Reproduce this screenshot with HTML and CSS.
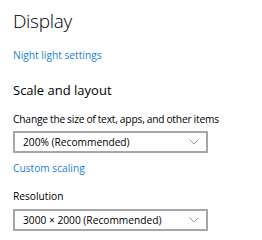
FILE: index.html
```html
<!DOCTYPE html>
<html>
<head>
    <title>Display</title>
    <link rel="stylesheet" href="styles.css">
</head>
<body>
    <h1 class="title">Display</h1>
    <a class="link link-first" href="#">Night light settings</a>

    <h2 class="section">Scale and layout</h2>

    <div class="field">
        <label class="label label-long">Change the size of text, apps, and other items</label>
        <div class="select">
            <span>200% (Recommended)</span>
            <svg class="chevron" width="10" height="6" viewBox="0 0 10 6"><path d="M0.5 0.5 L5 5 L9.5 0.5" fill="none" stroke="#999" stroke-width="1"/></svg>
        </div>
    </div>

    <a class="link link-custom" href="#">Custom scaling</a>

    <div class="field field-res">
        <label class="label">Resolution</label>
        <div class="select">
            <span>3000 × 2000 (Recommended)</span>
            <svg class="chevron" width="10" height="6" viewBox="0 0 10 6"><path d="M0.5 0.5 L5 5 L9.5 0.5" fill="none" stroke="#999" stroke-width="1"/></svg>
        </div>
    </div>
</body>
</html>
```

FILE: styles.css
```css
body {
    margin: 0;
    padding: 0 0 0 13px;
    background: #fff;
    color: #000;
    font-family: "Open Sans", "Noto Sans", sans-serif;
    font-size: 10.2px;
}
.title {
    margin: 7px 0 0;
    font-size: 19px;
    font-weight: 300;
    letter-spacing: -0.3px;
    line-height: 28px;
}
.link {
    display: block;
    width: max-content;
    color: #1a80d9;
    text-decoration: none;
    line-height: 16px;
}
.link-first {
    margin-top: 12px;
}
.section {
    margin: 17px 0 0;
    font-size: 13px;
    font-weight: 400;
    line-height: 20px;
}
.field {
    margin-top: 11px;
}
.field-res {
    margin-top: 12px;
}
.label {
    display: block;
    line-height: 16px;
}
.label-long {
    letter-spacing: -0.15px;
    word-spacing: -0.5px;
}
.select {
    display: flex;
    align-items: center;
    justify-content: space-between;
    box-sizing: border-box;
    width: 195px;
    height: 22px;
    margin-top: 4px;
    padding: 0 7px 0 8px;
    border: 2px solid #a6a6a6;
}
.field-res .select {
    margin-top: 5px;
}
.chevron {
    display: block;
}
.link-custom {
    margin-top: 7px;
}
```
